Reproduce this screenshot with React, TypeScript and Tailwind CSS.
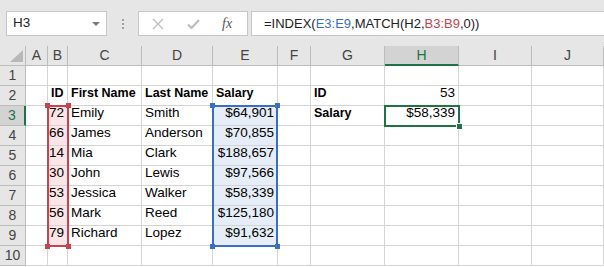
import React from "react";

type Cell = { v: string; bold?: boolean; right?: boolean };
type Row = Record<string, Cell>;

const COLS = ["A", "B", "C", "D", "E", "F", "G", "H", "I", "J"];

const ROWS: Row[] = [
  {},
  {
    B: { v: "ID", bold: true },
    C: { v: "First Name", bold: true },
    D: { v: "Last Name", bold: true },
    E: { v: "Salary", bold: true },
    G: { v: "ID", bold: true },
    H: { v: "53", right: true },
  },
  { B: { v: "72", right: true }, C: { v: "Emily" }, D: { v: "Smith" }, E: { v: "$64,901", right: true }, G: { v: "Salary", bold: true }, H: { v: "$58,339", right: true } },
  { B: { v: "66", right: true }, C: { v: "James" }, D: { v: "Anderson" }, E: { v: "$70,855", right: true } },
  { B: { v: "14", right: true }, C: { v: "Mia" }, D: { v: "Clark" }, E: { v: "$188,657", right: true } },
  { B: { v: "30", right: true }, C: { v: "John" }, D: { v: "Lewis" }, E: { v: "$97,566", right: true } },
  { B: { v: "53", right: true }, C: { v: "Jessica" }, D: { v: "Walker" }, E: { v: "$58,339", right: true } },
  { B: { v: "56", right: true }, C: { v: "Mark" }, D: { v: "Reed" }, E: { v: "$125,180", right: true } },
  { B: { v: "79", right: true }, C: { v: "Richard" }, D: { v: "Lopez" }, E: { v: "$91,632", right: true } },
  {},
];

function cellBg(col: string, row: number) {
  if (row >= 3 && row <= 9 && col === "B") return "bg-[#fbe5e7]";
  if (row >= 3 && row <= 9 && col === "E") return "bg-[#e5edf8]";
  return "bg-white";
}

function Handle({ cls, color }: { cls: string; color: string }) {
  return <div className={`absolute w-[5px] h-[5px] ${color} ${cls}`} />;
}

export default function App() {
  return (
    <div className="w-[604px] h-[267px] overflow-hidden bg-white font-['Liberation_Sans',Arial,sans-serif] text-black">
      {/* Formula bar */}
      <div className="h-[46px] bg-[#e6e6e6] flex items-start pt-[11px] pl-[6px]">
        <div className="w-[101px] h-[25px] bg-white border border-[#c6c6c6] flex items-center pl-[6px] pr-[6px] text-[13.5px] text-[#222]">
          <span className="flex-1">H3</span>
          <span className="w-0 h-0 border-l-[4px] border-r-[4px] border-t-[4px] border-l-transparent border-r-transparent border-t-[#7a7a7a]" />
        </div>
        <div className="w-[31px] h-[25px] flex flex-col items-center justify-center gap-[2px]">
          <span className="w-[2px] h-[2px] bg-[#a0a0a0]" />
          <span className="w-[2px] h-[2px] bg-[#a0a0a0]" />
          <span className="w-[2px] h-[2px] bg-[#a0a0a0]" />
        </div>
        <div className="w-[110px] h-[25px] bg-white border border-[#c6c6c6] flex items-center">
          <svg width="12" height="12" viewBox="0 0 12 12" className="ml-[13px]">
            <path d="M1 1 L11 11 M11 1 L1 11" stroke="#bcbcbc" strokeWidth="1.2" fill="none" />
          </svg>
          <svg width="13" height="12" viewBox="0 0 13 12" className="ml-[23px]">
            <path d="M1 6.5 L4.5 10 L12 2" stroke="#bcbcbc" strokeWidth="2" fill="none" />
          </svg>
          <span className="ml-[22px] font-['Liberation_Serif',serif] italic text-[14px] text-[#555]">fx</span>
        </div>
        <div className="ml-[3px] flex-1 h-[25px] bg-white border border-[#c6c6c6] border-r-0 flex items-center pl-[12px] text-[13px] text-[#222] whitespace-nowrap">
          <span>=INDEX(</span>
          <span className="text-[#3a6fc9]">E3:E9</span>
          <span>,MATCH(H2,</span>
          <span className="text-[#c8424f]">B3:B9</span>
          <span>,0))</span>
        </div>
      </div>

      {/* Sheet */}
      <div className="relative">
        <div className="grid grid-cols-[26px_22px_20px_74px_71px_65px_33px_74px_74px_73px_1fr] auto-rows-[20px]">
          {/* corner */}
          <div className="bg-[#e6e6e6] border-r border-b border-[#bcbcbc] relative">
            <svg width="13" height="12" viewBox="0 0 13 12" className="absolute right-[2px] bottom-[3px]">
              <path d="M13 0 L13 12 L0 12 Z" fill="#b8b8b8" />
            </svg>
          </div>
          {COLS.map(c => (
            <div
              key={c}
              className={`flex items-center justify-center text-[14px] ${
                c === "H"
                  ? "bg-[#d3d3d3] text-[#217346] border-r border-[#bcbcbc] border-b-2 border-b-[#217346]"
                  : "bg-[#e6e6e6] text-[#444] border-r border-b border-[#bcbcbc]"
              }`}
            >
              {c}
            </div>
          ))}

          {ROWS.map((row, i) => {
            const r = i + 1;
            return (
              <React.Fragment key={r}>
                <div
                  className={`flex items-center justify-center text-[14px] border-b border-[#bcbcbc] ${
                    r === 3
                      ? "bg-[#d3d3d3] text-[#217346] border-r-2 border-r-[#217346]"
                      : "bg-[#e6e6e6] text-[#444] border-r"
                  }`}
                >
                  {r}
                </div>
                {COLS.map(c => {
                  const cell = row[c];
                  return (
                    <div
                      key={c}
                      className={`${cellBg(c, r)} border-r border-b border-[#d4d4d4] flex items-end pb-[2px] whitespace-nowrap ${
                        cell?.right ? "justify-end pr-[3px]" : "pl-[3px]"
                      } ${cell?.bold ? "font-bold text-[12.5px]" : "text-[13.5px]"}`}
                    >
                      {cell?.v}
                    </div>
                  );
                })}
              </React.Fragment>
            );
          })}
        </div>

        {/* B3:B9 range */}
        <div className="absolute left-[47px] top-[59px] w-[22px] h-[142px] border-2 border-[#c8424f]">
          <Handle color="bg-[#c8424f]" cls="-left-[4px] -top-[4px]" />
          <Handle color="bg-[#c8424f]" cls="-right-[4px] -top-[4px]" />
          <Handle color="bg-[#c8424f]" cls="-left-[4px] -bottom-[4px]" />
          <Handle color="bg-[#c8424f]" cls="-right-[4px] -bottom-[4px]" />
        </div>

        {/* E3:E9 range */}
        <div className="absolute left-[212px] top-[59px] w-[66px] h-[142px] border-2 border-[#3a6fc9]">
          <Handle color="bg-[#3a6fc9]" cls="-left-[4px] -top-[4px]" />
          <Handle color="bg-[#3a6fc9]" cls="-right-[4px] -top-[4px]" />
          <Handle color="bg-[#3a6fc9]" cls="-left-[4px] -bottom-[4px]" />
          <Handle color="bg-[#3a6fc9]" cls="-right-[4px] -bottom-[4px]" />
        </div>

        {/* active cell H3 */}
        <div className="absolute left-[384px] top-[59px] w-[76px] h-[22px] border-2 border-[#217346]">
          <div className="absolute -right-[5px] -bottom-[5px] w-[7px] h-[7px] bg-[#217346] border border-white" />
        </div>
      </div>
    </div>
  );
}
